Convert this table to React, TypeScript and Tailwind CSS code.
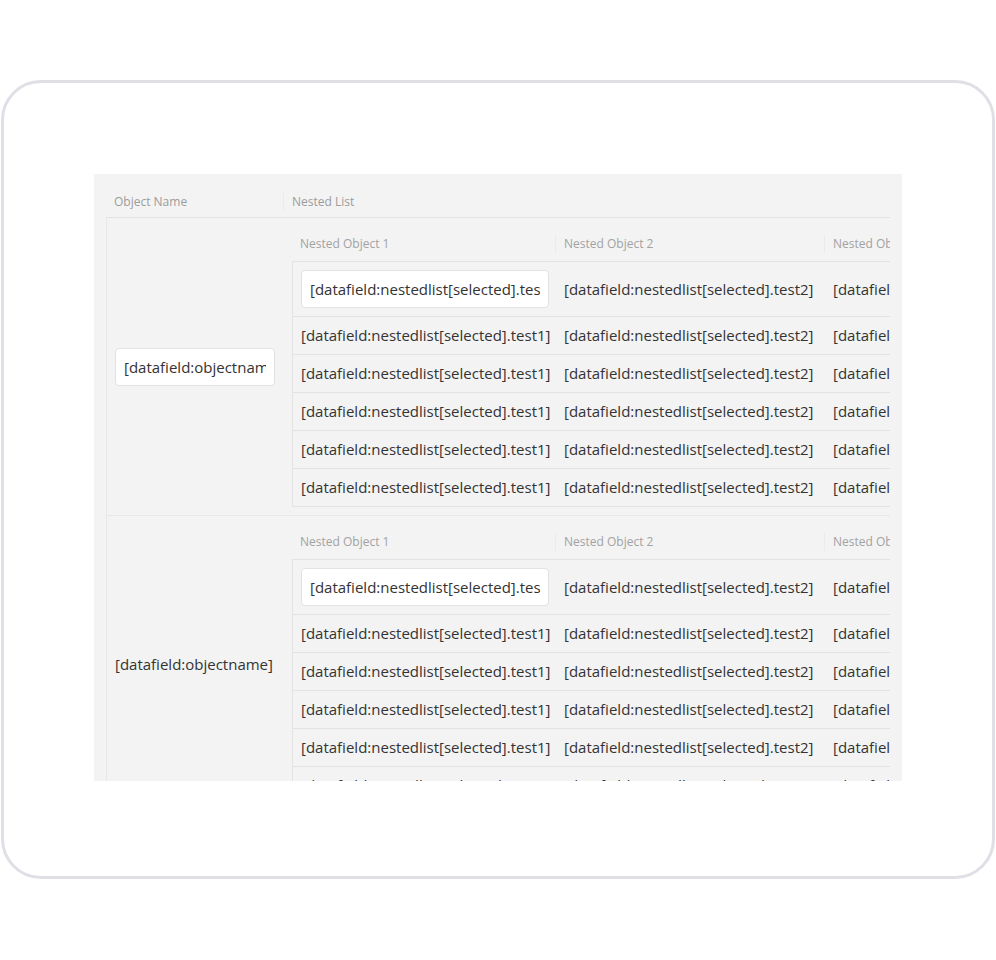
import React from "react";

const FONT = "font-['Open_Sans',sans-serif]";
const T1 = "[datafield:nestedlist[selected].test1]";
const T2 = "[datafield:nestedlist[selected].test2]";
const T3 = "[datafield:nestedlist[selected].test3]";

function Sep() {
  return <div className="h-[18px] w-px shrink-0 bg-[#ebebeb]" />;
}

function NestedTable() {
  const rows = [0, 1, 2, 3, 4];
  return (
    <div className="flex flex-col">
      <div className="flex h-[36px] items-center border-b border-[#e2e2e2] text-[12px] font-normal text-[#a2a2a2]">
        <div className="flex w-[264px] shrink-0 items-center justify-between pl-2">
          <span>Nested Object 1</span>
          <Sep />
        </div>
        <div className="flex w-[269px] shrink-0 items-center justify-between pl-2">
          <span>Nested Object 2</span>
          <Sep />
        </div>
        <div className="shrink-0 whitespace-nowrap pl-2">Nested Object 3</div>
      </div>
      <div className="border-l border-[#e2e2e2]">
        <div className="flex h-[55px] items-center border-b border-[#e2e2e2]">
          <div className="w-[263px] shrink-0 pl-2">
            <input
              readOnly
              value={T1}
              className="h-[38px] w-[248px] rounded border border-[#e2e2e2] bg-white px-2 text-[15px] font-medium text-[#333333] outline-none"
            />
          </div>
          <div className="w-[269px] shrink-0 whitespace-nowrap px-2">{T2}</div>
          <div className="shrink-0 whitespace-nowrap px-2">{T3}</div>
        </div>
        {rows.map((r) => (
          <div key={r} className="flex h-[38px] items-center border-b border-[#e2e2e2]">
            <div className="w-[263px] shrink-0 whitespace-nowrap pl-2">{T1}</div>
            <div className="w-[269px] shrink-0 whitespace-nowrap px-2">{T2}</div>
            <div className="shrink-0 whitespace-nowrap px-2">{T3}</div>
          </div>
        ))}
      </div>
    </div>
  );
}

function OuterRow({ input }: { input: boolean }) {
  return (
    <div className="flex border-b border-[#e8e8e8]">
      <div className="flex w-[177px] shrink-0 items-center pl-2">
        {input ? (
          <input
            readOnly
            value="[datafield:objectname]"
            className="h-[38px] w-[160px] rounded border border-[#e2e2e2] bg-white px-2 text-[15px] font-medium text-[#333333] outline-none"
          />
        ) : (
          <span className="whitespace-nowrap">[datafield:objectname]</span>
        )}
      </div>
      <div className="min-w-0 flex-1 overflow-hidden py-2 pl-2">
        <NestedTable />
      </div>
    </div>
  );
}

export default function App() {
  return (
    <div className={`h-[960px] w-[996px] bg-white pl-px pt-[80px] ${FONT}`}>
      <div className="h-[799px] w-[994px] rounded-[40px] border-[3px] border-[#dfe0e5] pl-[90px] pt-[91px]">
        <div className="h-[607px] w-[808px] overflow-hidden bg-[#f3f3f3] px-3 pt-3">
          <div className="w-[784px] overflow-hidden text-[15px] font-medium text-[#333333]">
            <div className="flex h-[32px] items-center border-b border-[#e2e2e2] text-[12px] font-normal text-[#9c9c9c]">
              <div className="flex w-[178px] shrink-0 items-center justify-between pl-2">
                <span>Object Name</span>
                <Sep />
              </div>
              <div className="pl-2">Nested List</div>
            </div>
            <div className="border-l border-[#e8e8e8]">
              <OuterRow input />
              <OuterRow input={false} />
            </div>
          </div>
        </div>
      </div>
    </div>
  );
}
